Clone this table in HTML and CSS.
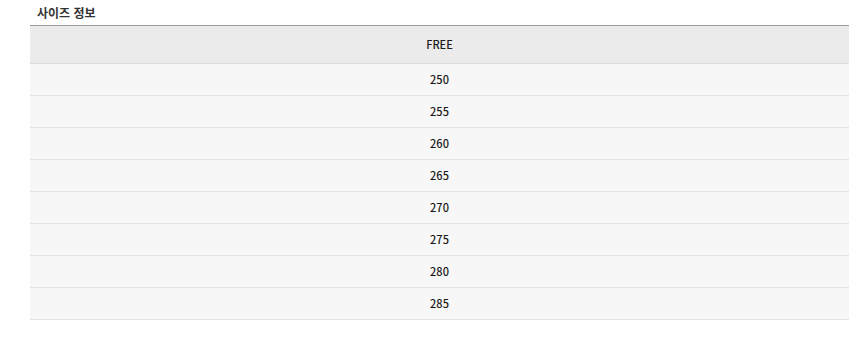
FILE: index.html
```html
<!DOCTYPE html>
<html lang="ko">
<head>
<meta charset="utf-8">
<link rel="stylesheet" href="styles.css">
</head>
<body>
<div class="wrap">
  <h3 class="title">사이즈 정보</h3>
  <table class="size-table">
    <thead>
      <tr><th>FREE</th></tr>
    </thead>
    <tbody>
      <tr><td>250</td></tr>
      <tr><td>255</td></tr>
      <tr><td>260</td></tr>
      <tr><td>265</td></tr>
      <tr><td>270</td></tr>
      <tr><td>275</td></tr>
      <tr><td>280</td></tr>
      <tr><td>285</td></tr>
    </tbody>
  </table>
</div>
</body>
</html>
```
FILE: styles.css
```css
html, body {
  margin: 0;
  padding: 0;
  background: #fff;
}
body {
  font-family: "Noto Sans CJK KR", "Noto Sans", sans-serif;
  color: #333;
}
.wrap {
  padding: 0 11px 0 30px;
}
.title {
  margin: 0;
  padding: 4px 0 0 7px;
  height: 21px;
  font-size: 12px;
  font-weight: 700;
  line-height: 18px;
  color: #333;
}
.size-table {
  width: 100%;
  border-collapse: collapse;
  border-top: 1px solid #9a9a9a;
}
.size-table th {
  height: 35px;
  padding: 0 0 2px;
  background: #ebebeb;
  border-bottom: 1px solid #dcdcdc;
  font-size: 11px;
  font-weight: 500;
  color: #1a1a1a;
  text-align: center;
  vertical-align: middle;
}
.size-table td {
  height: 29px;
  padding: 0 0 2px;
  background: #f7f7f7;
  border-bottom: 1px solid #e3e3e3;
  font-size: 11px;
  font-weight: 500;
  color: #1a1a1a;
  text-align: center;
  vertical-align: middle;
}
```
